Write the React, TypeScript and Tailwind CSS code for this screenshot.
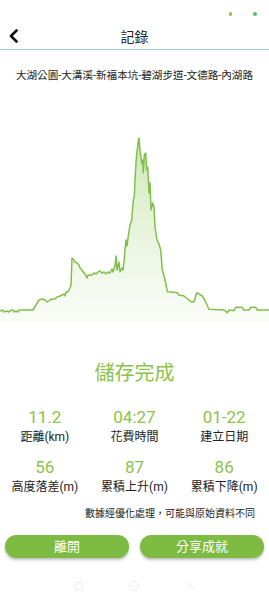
import React from 'react';

const LINE: [number, number][] = [
  [0, 311], [3, 310], [4, 312], [7, 311], [9, 312], [11, 310], [13, 310], [14, 312], [16, 311], [18, 312], [19, 310], [33, 310],
  [36, 305], [39, 300], [42, 299], [45, 300], [47, 302], [50, 300], [52, 299], [55, 299], [57, 297], [60, 296], [62, 295],
  [64, 294], [65, 296], [66, 292], [68, 292], [69, 290], [70, 288], [71, 285], [72, 258], [74, 260], [75, 262], [77, 263],
  [79, 265], [80, 268], [82, 270], [84, 273], [85, 274], [87, 278], [88, 275], [92, 275], [94, 273], [96, 274], [98, 272],
  [100, 271], [102, 273], [104, 272], [106, 274], [108, 272], [110, 273], [112, 269], [113, 272], [115, 266], [116, 256],
  [117, 270], [118, 266], [119, 262], [120, 272], [122, 268], [123, 270], [124, 262], [125, 250], [126, 240], [127, 246],
  [128, 238], [130, 225], [131.7, 220], [133.3, 200], [134.3, 196.7], [135, 180], [136, 163], [136.7, 153], [137.5, 148],
  [138.3, 140], [139, 138], [140, 150], [141, 158], [141.7, 163], [142.7, 160], [143.3, 173], [144.3, 155], [145.7, 153],
  [146.7, 170], [147.7, 167], [149, 193], [150, 183], [151, 210], [152.7, 203], [154, 207], [155, 227], [157, 240],
  [159, 244], [160.7, 250], [162.3, 270], [164, 276], [165.7, 283], [167.3, 291.7], [172, 292], [177.3, 292.7], [179, 295],
  [184, 296], [189, 300], [190.7, 301.7], [194, 301.7], [196.7, 292.7], [199, 294], [202.3, 296], [204.7, 300], [207, 305],
  [209, 309.3], [224, 310], [227.3, 312.7], [229, 310], [234, 310.7], [235.7, 307.3], [242.3, 307.3], [244, 310], [249, 310],
  [250.7, 307.3], [255.7, 307.3], [257.3, 310], [269, 310],
];

const STATS = [
  { value: '11.2', label: '距離(km)' },
  { value: '04:27', label: '花費時間' },
  { value: '01-22', label: '建立日期' },
  { value: '56', label: '高度落差(m)' },
  { value: '87', label: '累積上升(m)' },
  { value: '86', label: '累積下降(m)' },
];

const FONT = "font-['Roboto','Noto_Sans_CJK_TC',sans-serif]";

function ElevationChart() {
  const line = LINE.map(([x, y]) => `${x},${y}`).join(' ');
  const area = `0,322 ${line} 269,322`;
  return (
    <svg width={269} height={230} viewBox="0 101 269 230" className="block">
      <defs>
        <linearGradient id="fill" x1="0" y1="130" x2="0" y2="322" gradientUnits="userSpaceOnUse">
          <stop offset="0" stopColor="#bfdfa0" stopOpacity="0.85" />
          <stop offset="1" stopColor="#e8f3dd" stopOpacity="0.25" />
        </linearGradient>
      </defs>
      <polygon points={area} fill="url(#fill)" />
      <polyline points={line} fill="none" stroke="#80c04a" strokeWidth={1.5} strokeLinejoin="round" />
    </svg>
  );
}

export default function App() {
  return (
    <div className={`w-[269px] h-[600px] bg-white overflow-hidden flex flex-col ${FONT}`}>
      {/* Status bar */}
      <div className="h-6 relative shrink-0">
        <span className="absolute left-[229px] top-[12px] w-[3px] h-[4px] rounded-sm bg-[#8bc34a]" />
        <span className="absolute left-[253px] top-[12px] w-[4px] h-[4px] rounded-full bg-[#4cc36a]" />
      </div>

      {/* Header */}
      <div className="h-[26px] shrink-0 relative flex items-center justify-center border-b border-[#9fd3cd]">
        <svg width="10" height="14" viewBox="0 0 10 14" className="absolute left-[9px] top-[5px]">
          <path d="M7.5 1.5 L2 7 L7.5 12.5" fill="none" stroke="#111" strokeWidth="2.6" strokeLinecap="round" strokeLinejoin="round" />
        </svg>
        <span className="text-[14px] leading-none text-[#222]">記錄</span>
      </div>

      {/* Route name */}
      <div className="h-[51px] shrink-0 flex items-center justify-center">
        <span className="text-[10.6px] text-[#222] whitespace-nowrap">大湖公園-大溝溪-新福本坑-碧湖步道-文德路-內湖路</span>
      </div>

      <ElevationChart />

      <div className="mt-[28px] h-[28px] leading-[28px] text-center text-[20px] text-[#8bc34a]">儲存完成</div>

      <div className="mt-[19px] grid grid-cols-3 gap-y-[11px]">
        {STATS.map((s) => (
          <div key={s.label} className="flex flex-col items-center">
            <span className="text-[17px] leading-[22px] text-[#8bc34a]">{s.value}</span>
            <span className="mt-px text-[12px] leading-[16px] text-[#222]">{s.label}</span>
          </div>
        ))}
      </div>

      <div className="mt-[12px] pr-[14px] text-right text-[10px] leading-[14px] text-[#222]">
        數據經優化處理，可能與原始資料不同
      </div>

      <div className="mt-[14px] px-[5px] flex gap-[11px]">
        <button className="flex-1 h-[23px] rounded-full bg-[#7dbb42] text-white text-[13px] shadow-[0_2px_3px_rgba(0,0,0,0.25)]">
          離開
        </button>
        <button className="flex-1 h-[23px] rounded-full bg-[#7dbb42] text-white text-[13px] shadow-[0_2px_3px_rgba(0,0,0,0.25)]">
          分享成就
        </button>
      </div>

      {/* Nav bar */}
      <div className="mt-auto h-[30px] flex items-center justify-center gap-[46px] pt-[2px]">
        <span className="w-[8px] h-[8px] border border-[#ececec] rounded-[1px]" />
        <span className="w-[10px] h-[10px] border border-[#ececec] rounded-full" />
        <svg width="10" height="8" viewBox="0 0 10 8">
          <path d="M1 1 L9 7" stroke="#ececec" strokeWidth="1" />
        </svg>
      </div>
    </div>
  );
}
